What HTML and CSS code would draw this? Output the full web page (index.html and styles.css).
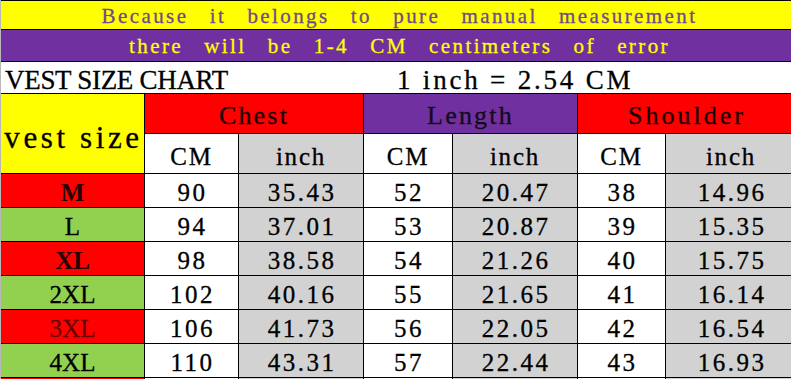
FILE: index.html
```html
<!DOCTYPE html>
<html lang="en">
<head>
<meta charset="utf-8">
<title>Vest size chart</title>
<link rel="stylesheet" href="styles.css">
</head>
<body>
<div class="chart">
  <div class="cell full note-1">Because  it  belongs  to  pure  manual  measurement</div>
  <div class="cell full note-2">there  will  be  1-4  CM  centimeters  of  error</div>
  <div class="cell full title-row">
    <span class="title">VEST SIZE CHART</span>
    <span class="conv">1 inch = 2.54 CM</span>
  </div>

  <div class="cell vest-size">vest size</div>
  <div class="cell group red">Chest</div>
  <div class="cell group purple">Length</div>
  <div class="cell group red wide">Shoulder</div>

  <div class="cell sub">CM</div>
  <div class="cell sub gray">inch</div>
  <div class="cell sub">CM</div>
  <div class="cell sub gray">inch</div>
  <div class="cell sub">CM</div>
  <div class="cell sub gray">inch</div>

  <div class="cell size red bold">M</div>
  <div class="cell num">90</div><div class="cell num gray">35.43</div>
  <div class="cell num">52</div><div class="cell num gray">20.47</div>
  <div class="cell num">38</div><div class="cell num gray">14.96</div>

  <div class="cell size green">L</div>
  <div class="cell num">94</div><div class="cell num gray">37.01</div>
  <div class="cell num">53</div><div class="cell num gray">20.87</div>
  <div class="cell num">39</div><div class="cell num gray">15.35</div>

  <div class="cell size red bold">XL</div>
  <div class="cell num">98</div><div class="cell num gray">38.58</div>
  <div class="cell num">54</div><div class="cell num gray">21.26</div>
  <div class="cell num">40</div><div class="cell num gray">15.75</div>

  <div class="cell size green">2XL</div>
  <div class="cell num">102</div><div class="cell num gray">40.16</div>
  <div class="cell num">55</div><div class="cell num gray">21.65</div>
  <div class="cell num">41</div><div class="cell num gray">16.14</div>

  <div class="cell size red darkred">3XL</div>
  <div class="cell num">106</div><div class="cell num gray">41.73</div>
  <div class="cell num">56</div><div class="cell num gray">22.05</div>
  <div class="cell num">42</div><div class="cell num gray">16.54</div>

  <div class="cell size green">4XL</div>
  <div class="cell num">110</div><div class="cell num gray">43.31</div>
  <div class="cell num">57</div><div class="cell num gray">22.44</div>
  <div class="cell num">43</div><div class="cell num gray">16.93</div>

  <div class="cell size red"></div>
  <div class="cell num"></div><div class="cell num gray"></div>
  <div class="cell num"></div><div class="cell num gray"></div>
  <div class="cell num"></div><div class="cell num gray"></div>
</div>
</body>
</html>
```

FILE: styles.css
```css
html, body {
  margin: 0;
  padding: 0;
  background: #ffffff;
  overflow: hidden;
}

body {
  width: 791px;
  height: 379px;
  font-family: "Liberation Serif", "Times New Roman", serif;
  color: #000;
}

.chart {
  display: grid;
  grid-template-columns: 143px 93px 124px 88px 124px 87px 130px;
  grid-template-rows: 28px 31px 31px 39px 39px 33px 33px 33px 33px 33px 33px 40px;
  gap: 1px;
  padding-top: 1px;
  background: #000;
  border-left: 1px solid #b8b8b8;
  width: max-content;
}

.cell {
  background: #fff;
  display: flex;
  align-items: center;
  justify-content: center;
  white-space: pre;
  overflow: hidden;
  box-sizing: border-box;
  -webkit-text-stroke: 0.3px currentColor;
}

.full {
  grid-column: 1 / -1;
}

.note-1 {
  background: #ffff00;
  color: #6e4a8e;
  font-size: 21px;
  letter-spacing: 2.4px;
  word-spacing: 3px;
  padding-top: 3px;
  padding-left: 2px;
}

.note-2 {
  background: #7030a0;
  color: #ffff00;
  font-size: 21px;
  letter-spacing: 2.4px;
  word-spacing: 3px;
  padding-top: 2px;
  padding-left: 2px;
}

.title-row {
  justify-content: flex-start;
  padding-top: 5px;
  font-size: 27px;
}

.title {
  width: 392px;
  padding-left: 4px;
  letter-spacing: -0.3px;
}

.conv {
  letter-spacing: 2.8px;
}

.vest-size {
  grid-row: span 2;
  background: #ffff00;
  font-size: 31px;
  letter-spacing: 3.6px;
  padding-top: 8px;
  padding-left: 2px;
}

.group {
  grid-column: span 2;
  font-size: 26px;
  letter-spacing: 2.2px;
  padding-top: 5px;
  color: #1c0000;
}

.group.purple {
  color: #120c18;
}

.group.wide {
  letter-spacing: 3px;
}

.sub {
  font-size: 25px;
  letter-spacing: 1.8px;
  padding-top: 6px;
}

.num {
  font-size: 25px;
  letter-spacing: 2.5px;
  padding-top: 5px;
  padding-left: 2px;
}

.size {
  font-size: 25px;
  padding-top: 5px;
  color: #000;
}

.size.bold {
  font-weight: bold;
  color: #2a0000;
  -webkit-text-stroke: 0;
}

.size.darkred {
  color: #6a0000;
}

.red {
  background: #ff0000;
}

.purple {
  background: #7030a0;
}

.green {
  background: #92d050;
}

.gray {
  background: #d2d2d2;
}
```
